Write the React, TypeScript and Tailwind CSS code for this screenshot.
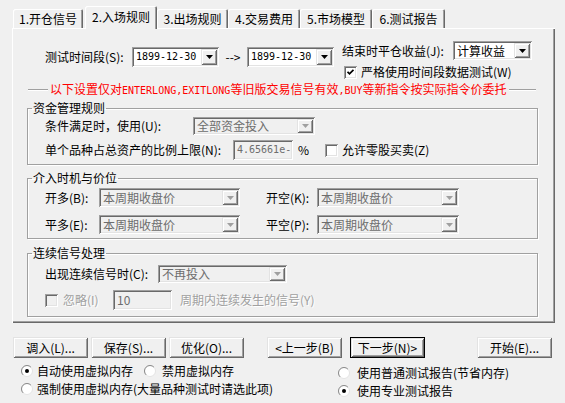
import React from "react";

const sunken =
  "shadow-[inset_1px_1px_0_#a0a0a0,inset_-1px_-1px_0_#ffffff,inset_2px_2px_0_#696969,inset_-2px_-2px_0_#e3e3e3]";
const raised =
  "shadow-[inset_1px_1px_0_#e3e3e3,inset_-1px_-1px_0_#696969,inset_2px_2px_0_#ffffff,inset_-2px_-2px_0_#a0a0a0]";
const grayText = "text-[#a0a0a0] [text-shadow:1px_1px_0_#ffffff]";
const mono = "font-['DejaVu_Sans_Mono'] text-[10px]";

const Arrow = ({ disabled }: { disabled?: boolean }) => (
  <svg width="7" height="4" viewBox="0 0 7 4">
    <path d="M0 0h7L3.5 4z" fill={disabled ? "#a0a0a0" : "#000000"} />
  </svg>
);

type ComboProps = {
  value: string;
  className: string;
  disabled?: boolean;
  monoText?: boolean;
};

const Combo = ({ value, className, disabled, monoText }: ComboProps) => (
  <div
    className={`flex p-[2px] ${sunken} ${
      disabled ? "bg-[#f0f0f0] text-[#6d6d6d]" : "bg-white text-black"
    } ${className}`}
  >
    <div
      className={`flex-1 flex items-center pl-[2px] whitespace-nowrap leading-[12px] ${
        monoText ? mono : ""
      }`}
    >
      {value}
    </div>
    <div className={`w-[16px] flex items-center justify-center bg-[#f0f0f0] ${raised}`}>
      <Arrow disabled={disabled} />
    </div>
  </div>
);

const Edit = ({ value, className, monoText }: { value: string; className: string; monoText?: boolean }) => (
  <div
    className={`flex items-center pl-[4px] whitespace-nowrap bg-[#f0f0f0] text-[#6d6d6d] ${sunken} ${
      monoText ? mono : ""
    } ${className}`}
  >
    {value}
  </div>
);

const Check = ({ checked, disabled }: { checked?: boolean; disabled?: boolean }) => (
  <span
    className={`w-[13px] h-[13px] flex items-center justify-center shrink-0 ${sunken} ${
      disabled ? "bg-[#f0f0f0]" : "bg-white"
    }`}
  >
    {checked && (
      <svg width="7" height="7" viewBox="0 0 7 7">
        <polyline points="0.5,2.8 2.5,4.8 6.5,0.8" fill="none" stroke="#000" strokeWidth="1.8" />
      </svg>
    )}
  </span>
);

const Radio = ({ checked }: { checked?: boolean }) => (
  <svg width="12" height="12" viewBox="0 0 12 12" className="shrink-0">
    <circle cx="6" cy="6" r="5.5" fill="#ffffff" stroke="#e3e3e3" />
    <path d="M2.1 9.9A5.5 5.5 0 0 1 9.9 2.1" fill="none" stroke="#8a8a8a" />
    {checked && <circle cx="6" cy="6" r="2" fill="#000000" />}
  </svg>
);

const Btn = ({ label, className, def }: { label: string; className: string; def?: boolean }) => (
  <div className={`h-[21px] w-[75px] ${def ? "border border-black" : ""} ${className}`}>
    <div className={`h-full flex items-center justify-center ${raised}`}>{label}</div>
  </div>
);

const Tab = ({ label, className, active }: { label: string; className: string; active?: boolean }) =>
  active ? (
    <div
      className={`relative z-10 -mb-px h-[23px] pt-[4px] flex justify-center bg-[#f0f0f0] rounded-t-[2px] shadow-[inset_1px_1px_0_#ffffff,inset_-1px_0_0_#696969,inset_-2px_0_0_#a0a0a0] ${className}`}
    >
      {label}
    </div>
  ) : (
    <div
      className={`h-[19px] pt-[3px] flex justify-center rounded-t-[2px] shadow-[inset_1px_1px_0_#ffffff,inset_-1px_0_0_#696969,inset_-2px_0_0_#a0a0a0] ${className}`}
    >
      {label}
    </div>
  );

const Group = ({ title, className, children }: { title: string; className: string; children: React.ReactNode }) => (
  <fieldset
    className={`border border-[#a0a0a0] shadow-[inset_1px_1px_0_#ffffff,1px_1px_0_#ffffff] ${className}`}
  >
    <legend className="ml-[4px] px-[1px]">{title}</legend>
    {children}
  </fieldset>
);

export default function App() {
  return (
    <div className="w-[565px] h-[403px] overflow-hidden bg-[#f0f0f0] pt-[6px] text-[12px] leading-[14px] text-black font-['Noto_Sans_CJK_SC',sans-serif]">
      {/* tabs */}
      <div className="flex items-end pl-[12px]">
        <Tab label="1.开仓信号" className="w-[70px] ml-[1px]" />
        <Tab label="2.入场规则" className="w-[72px] ml-[2px]" active />
        <Tab label="3.出场规则" className="w-[71px]" />
        <Tab label="4.交易费用" className="w-[72px]" />
        <Tab label="5.市场模型" className="w-[72px]" />
        <Tab label="6.测试报告" className="w-[73px]" />
      </div>

      {/* tab page */}
      <div className="ml-[12px] w-[543px] h-[295px] pt-[13px] pl-[15px] pr-[17px] shadow-[inset_1px_1px_0_#ffffff,inset_-1px_-1px_0_#696969,inset_-2px_-2px_0_#a0a0a0]">
        <div className="flex items-start">
          <div className="mt-[6px] ml-[18px] flex items-center">
            <span className="w-[87px] whitespace-nowrap">测试时间段(S):</span>
            <Combo value="1899-12-30" className="w-[87px] h-[20px]" monoText />
            <span className="w-[28px] text-center">--&gt;</span>
            <Combo value="1899-12-30" className="w-[87px] h-[20px]" monoText />
          </div>
          <div className="ml-[8px] flex flex-col">
            <div className="flex items-center">
              <span className="w-[111px] whitespace-nowrap">结束时平仓收益(J):</span>
              <Combo value="计算收益" className="w-[79px] h-[19px]" />
            </div>
            <div className="mt-[5px] pl-[2px] flex items-center gap-[4px]">
              <Check checked />
              <span>严格使用时间段数据测试(W)</span>
            </div>
          </div>
        </div>

        <div className="mt-[4px] flex items-center h-[14px]">
          <div className="ml-[1px] w-[20px] h-0 border-t border-b border-t-[#a0a0a0] border-b-white" />
          <span className="mx-[2px] whitespace-nowrap text-[#ff0000]">
            以下设置仅对<span className={mono}>ENTERLONG,EXITLONG</span>等旧版交易信号有效
            <span className={mono}>,BUY</span>等新指令按实际指令价委托
          </span>
          <div className="flex-1 mr-[2px] h-0 border-t border-b border-t-[#a0a0a0] border-b-white" />
        </div>

        <Group title="资金管理规则" className="mt-[4px] pb-[4px]">
          <div className="pl-[17px]">
            <div className="mt-[2px] flex items-center">
              <span className="w-[148px] whitespace-nowrap">条件满足时，使用(U):</span>
              <Combo value="全部资金投入" className="w-[122px] h-[18px]" disabled />
            </div>
            <div className="mt-[5px] flex items-center">
              <span className="w-[188px] whitespace-nowrap">单个品种占总资产的比例上限(N):</span>
              <Edit value="4.65661e-" className="w-[60px] h-[20px]" monoText />
              <span className="w-[32px] pl-[5px]">%</span>
              <Check />
              <span className="ml-[4px]">允许零股买卖(Z)</span>
            </div>
          </div>
        </Group>

        <Group title="介入时机与价位" className="mt-[6px] pb-[4px]">
          <div className="pl-[17px]">
            <div className="mt-[3px] flex items-center">
              <span className="w-[54px] whitespace-nowrap">开多(B):</span>
              <Combo value="本周期收盘价" className="w-[141px] h-[19px]" disabled />
              <span className="ml-[26px] w-[51px] whitespace-nowrap">开空(K):</span>
              <Combo value="本周期收盘价" className="w-[142px] h-[19px]" disabled />
            </div>
            <div className="mt-[8px] flex items-center">
              <span className="w-[54px] whitespace-nowrap">平多(E):</span>
              <Combo value="本周期收盘价" className="w-[141px] h-[19px]" disabled />
              <span className="ml-[26px] w-[51px] whitespace-nowrap">平空(P):</span>
              <Combo value="本周期收盘价" className="w-[142px] h-[19px]" disabled />
            </div>
          </div>
        </Group>

        <Group title="连续信号处理" className="mt-[7px] pb-[6px]">
          <div className="pl-[17px]">
            <div className="mt-[5px] flex items-center">
              <span className="w-[113px] whitespace-nowrap">出现连续信号时(C):</span>
              <Combo value="不再投入" className="w-[129px] h-[18px]" disabled />
            </div>
            <div className="mt-[7px] flex items-center">
              <Check disabled />
              <span className={`ml-[5px] w-[50px] ${grayText}`}>忽略(I)</span>
              <Edit value="10" className="w-[59px] h-[20px]" />
              <span className={`ml-[8px] whitespace-nowrap ${grayText}`}>周期内连续发生的信号(Y)</span>
            </div>
          </div>
        </Group>
      </div>

      {/* buttons */}
      <div className="mt-[14px] flex items-center">
        <Btn label="调入(L)..." className="ml-[13px]" />
        <Btn label="保存(S)..." className="ml-[3px]" />
        <Btn label="优化(O)..." className="ml-[3px]" />
        <Btn label="<上一步(B)" className="ml-[23px]" />
        <Btn label="下一步(N)>" className="ml-[8px]" def />
        <Btn label="开始(E)..." className="ml-[52px]" />
      </div>

      {/* memory / report options */}
      <div className="mt-[6px] flex">
        <div className="ml-[21px] w-[317px] flex flex-col gap-[4px]">
          <div className="flex items-center">
            <Radio checked />
            <span className="ml-[4px]">自动使用虚拟内存</span>
            <span className="ml-[11px] flex">
              <Radio />
            </span>
            <span className="ml-[6px]">禁用虚拟内存</span>
          </div>
          <div className="flex items-center">
            <Radio />
            <span className="ml-[4px] whitespace-nowrap">强制使用虚拟内存(大量品种测试时请选此项)</span>
          </div>
        </div>
        <div className="mt-[2px] flex flex-col gap-[4px]">
          <div className="flex items-center">
            <Radio />
            <span className="ml-[7px]">使用普通测试报告(节省内存)</span>
          </div>
          <div className="flex items-center">
            <Radio checked />
            <span className="ml-[7px]">使用专业测试报告</span>
          </div>
        </div>
      </div>
    </div>
  );
}
